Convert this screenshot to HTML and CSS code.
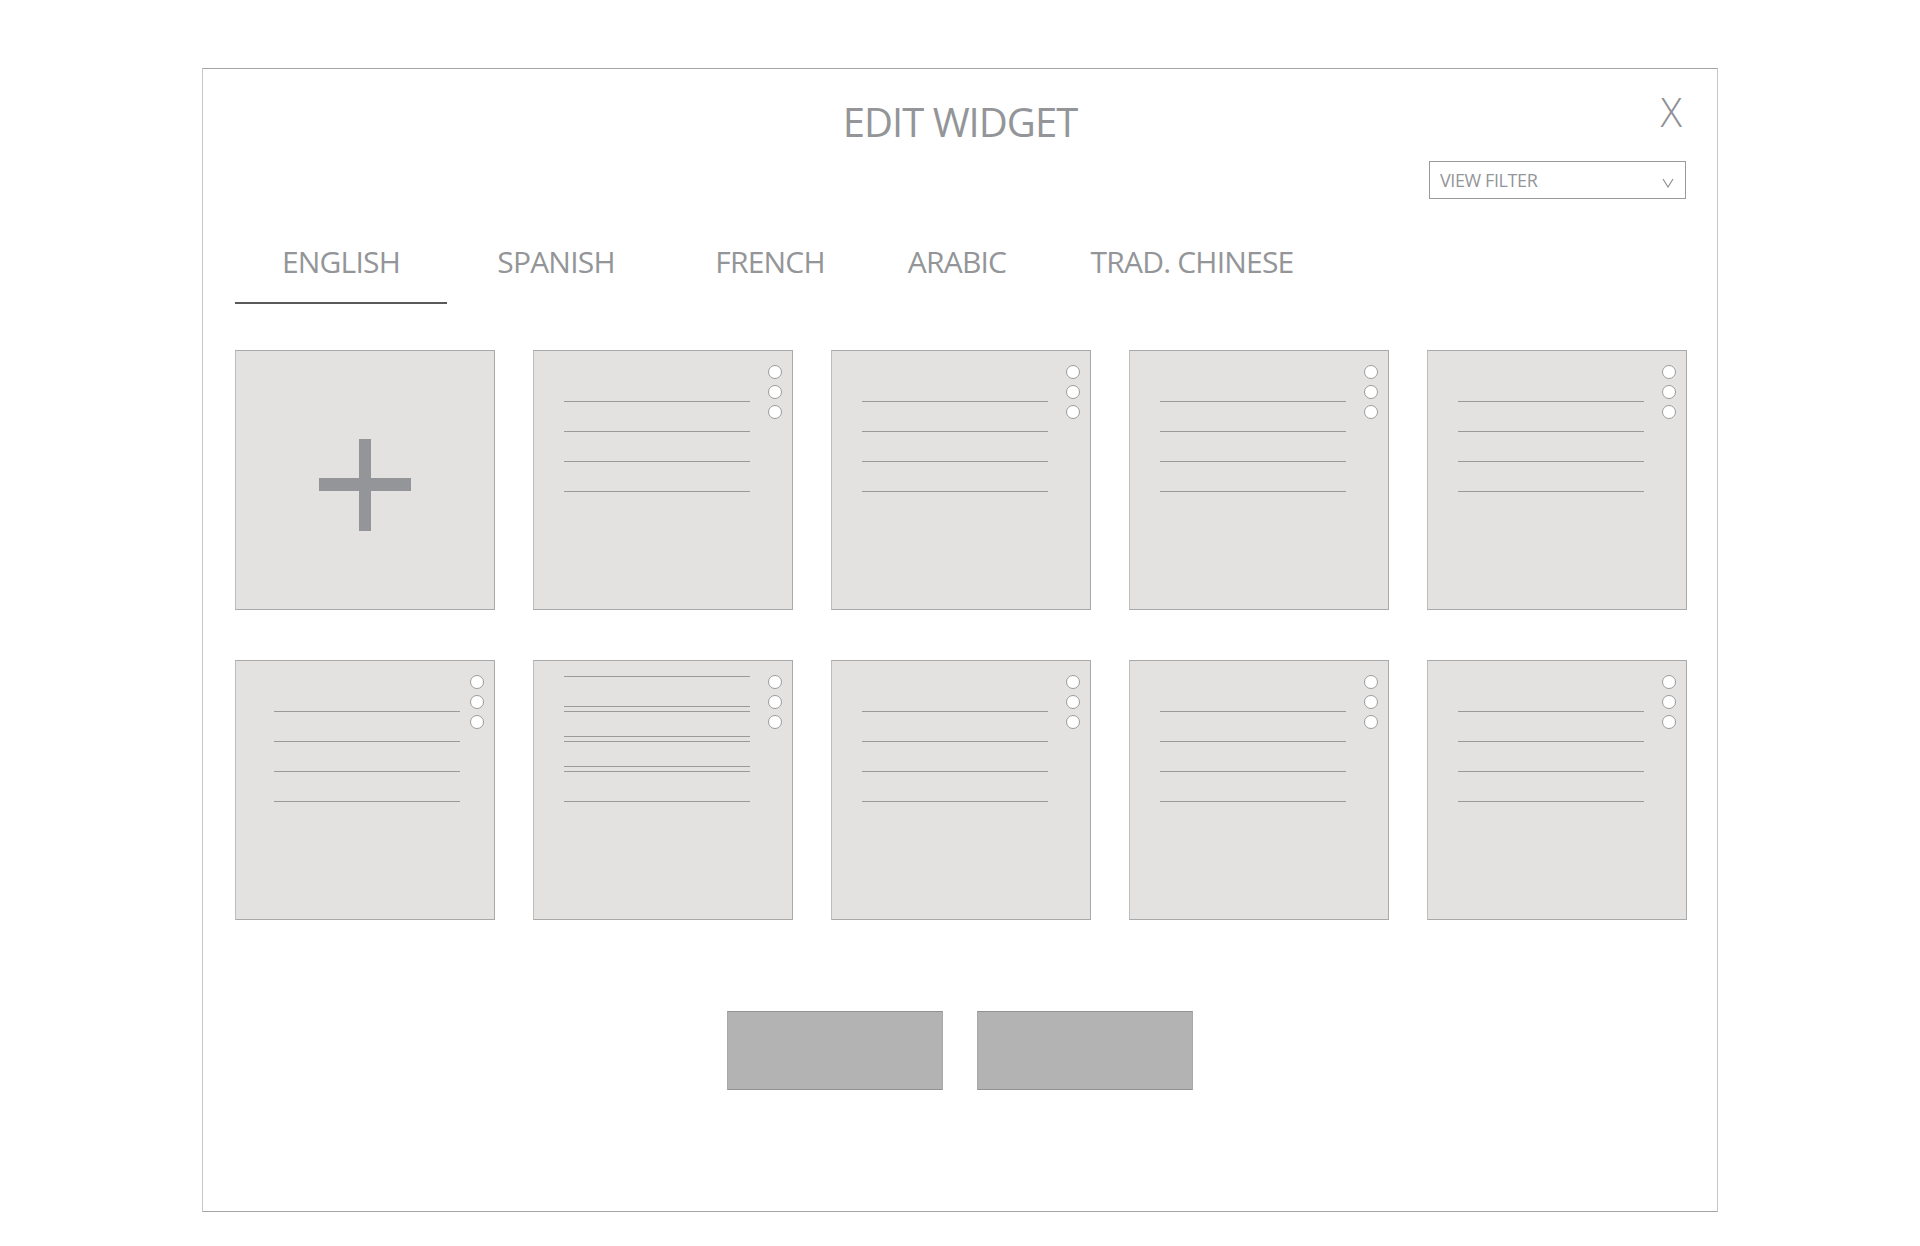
FILE: index.html
```html
<!DOCTYPE html>
<html lang="en">
<head>
  <meta charset="UTF-8">
  <meta name="viewport" content="width=device-width, initial-scale=1.0">
  <title>Edit Widget</title>
  <link rel="stylesheet" href="styles.css">
</head>
<body>
  <div class="dialog">
    <span class="close">X</span>
    <h1 class="title">EDIT WIDGET</h1>

    <div class="filter-row">
      <div class="filter">
        <span>VIEW FILTER</span>
        <svg class="chevron" width="12" height="10" viewBox="0 0 12 10"><polyline points="1,1 6,9 11,1" fill="none" stroke="#8f9194" stroke-width="1.2"/></svg>
      </div>
    </div>

    <ul class="tabs">
      <li class="tab active">ENGLISH</li>
      <li class="tab">SPANISH</li>
      <li class="tab">FRENCH</li>
      <li class="tab">ARABIC</li>
      <li class="tab">TRAD. CHINESE</li>
    </ul>

    <div class="grid">
      <div class="card add">
        <span class="plus"></span>
      </div>
      <div class="card">
        <div class="dots"><i></i><i></i><i></i></div>
        <div class="lines"><b></b><b></b><b></b><b></b></div>
      </div>
      <div class="card">
        <div class="dots"><i></i><i></i><i></i></div>
        <div class="lines"><b></b><b></b><b></b><b></b></div>
      </div>
      <div class="card">
        <div class="dots"><i></i><i></i><i></i></div>
        <div class="lines"><b></b><b></b><b></b><b></b></div>
      </div>
      <div class="card">
        <div class="dots"><i></i><i></i><i></i></div>
        <div class="lines"><b></b><b></b><b></b><b></b></div>
      </div>

      <div class="card">
        <div class="dots"><i></i><i></i><i></i></div>
        <div class="lines wide"><b></b><b></b><b></b><b></b></div>
      </div>
      <div class="card">
        <div class="dots"><i></i><i></i><i></i></div>
        <div class="lines ghost"><b></b><b></b><b></b><b></b></div>
        <div class="lines"><b></b><b></b><b></b><b></b></div>
      </div>
      <div class="card">
        <div class="dots"><i></i><i></i><i></i></div>
        <div class="lines"><b></b><b></b><b></b><b></b></div>
      </div>
      <div class="card">
        <div class="dots"><i></i><i></i><i></i></div>
        <div class="lines"><b></b><b></b><b></b><b></b></div>
      </div>
      <div class="card">
        <div class="dots"><i></i><i></i><i></i></div>
        <div class="lines"><b></b><b></b><b></b><b></b></div>
      </div>
    </div>

    <div class="actions">
      <button class="btn"></button>
      <button class="btn"></button>
    </div>
  </div>
</body>
</html>
```

FILE: styles.css
```css
body {
  margin: 0;
  background: #fff;
  font-family: 'Segoe UI', 'Open Sans', sans-serif;
  color: #939598;
}
.dialog {
  position: relative;
  box-sizing: border-box;
  width: 1516px;
  height: 1144px;
  margin: 68px auto 0;
  padding: 0 32px;
  border: 1px solid #a4a4a4;
  border-left-color: #c6c6c6;
  border-right-color: #c6c6c6;
}
.close {
  position: absolute;
  top: 23px;
  right: 35px;
  font-size: 40px;
  line-height: 40px;
  font-weight: 300;
  color: #8e9093;
}
.title {
  margin: 0;
  padding-top: 33px;
  font-size: 40px;
  line-height: 40px;
  font-weight: 400;
  letter-spacing: -1px;
  text-align: center;
  color: #939598;
}
.filter-row {
  display: flex;
  justify-content: flex-end;
  margin-top: 19px;
}
.filter {
  box-sizing: border-box;
  width: 257px;
  height: 38px;
  margin-right: -1px;
  display: flex;
  align-items: center;
  justify-content: space-between;
  padding: 0 11px 0 10px;
  border: 1px solid #9a9a9a;
  font-size: 18px;
  letter-spacing: -0.4px;
  color: #939598;
}
.chevron {
  margin-top: 5px;
}
.tabs {
  list-style: none;
  margin: 45px 0 0;
  padding: 0;
  display: flex;
}
.tab {
  padding: 0 0 22px;
  font-size: 30px;
  line-height: 36px;
  letter-spacing: -0.8px;
  text-align: center;
  border-bottom: 2px solid transparent;
}
.tab:nth-child(1) { width: 212px; }
.tab:nth-child(2) { width: 218px; }
.tab:nth-child(3) { width: 210px; }
.tab:nth-child(4) { width: 164px; }
.tab:nth-child(5) { width: 306px; }
.tab.active {
  border-bottom-color: #58595b;
}
.grid {
  display: grid;
  grid-template-columns: repeat(5, 260px);
  grid-auto-rows: 260px;
  column-gap: 38px;
  row-gap: 50px;
  margin-top: 46px;
}
.card {
  position: relative;
  box-sizing: border-box;
  background: #e3e2e1;
  border: 1px solid #a9a9a9;
  border-left-color: #bdbdbd;
  padding: 50px 0 0 30px;
}
.card.add {
  display: flex;
  align-items: center;
  justify-content: center;
  padding: 10px 0 0;
}
.plus {
  position: relative;
  width: 92px;
  height: 92px;
}
.plus::before,
.plus::after {
  content: '';
  position: absolute;
  background: #939598;
}
.plus::before {
  left: 40px;
  top: 0;
  width: 12px;
  height: 92px;
}
.plus::after {
  left: 0;
  top: 39px;
  width: 92px;
  height: 13px;
}
.lines {
  display: flex;
  flex-direction: column;
  gap: 29px;
}
.lines b {
  display: block;
  width: 186px;
  height: 1px;
  background: #9a9a9a;
}
.lines.wide {
  padding-left: 8px;
}
.lines.ghost {
  position: absolute;
  top: 15px;
  left: 30px;
}
.dots {
  position: absolute;
  top: 14px;
  right: 10px;
  display: flex;
  flex-direction: column;
  gap: 6px;
}
.dots i {
  display: block;
  width: 12px;
  height: 12px;
  border: 1px solid #9c9c9c;
  border-radius: 50%;
  background: #fff;
}
.actions {
  display: flex;
  justify-content: center;
  gap: 34px;
  margin-top: 91px;
}
.btn {
  width: 216px;
  height: 79px;
  background: #b4b3b3;
  border: 1px solid #929292;
  border-left-color: #a8a8a8;
  border-right-color: #a8a8a8;
  padding: 0;
}
```
